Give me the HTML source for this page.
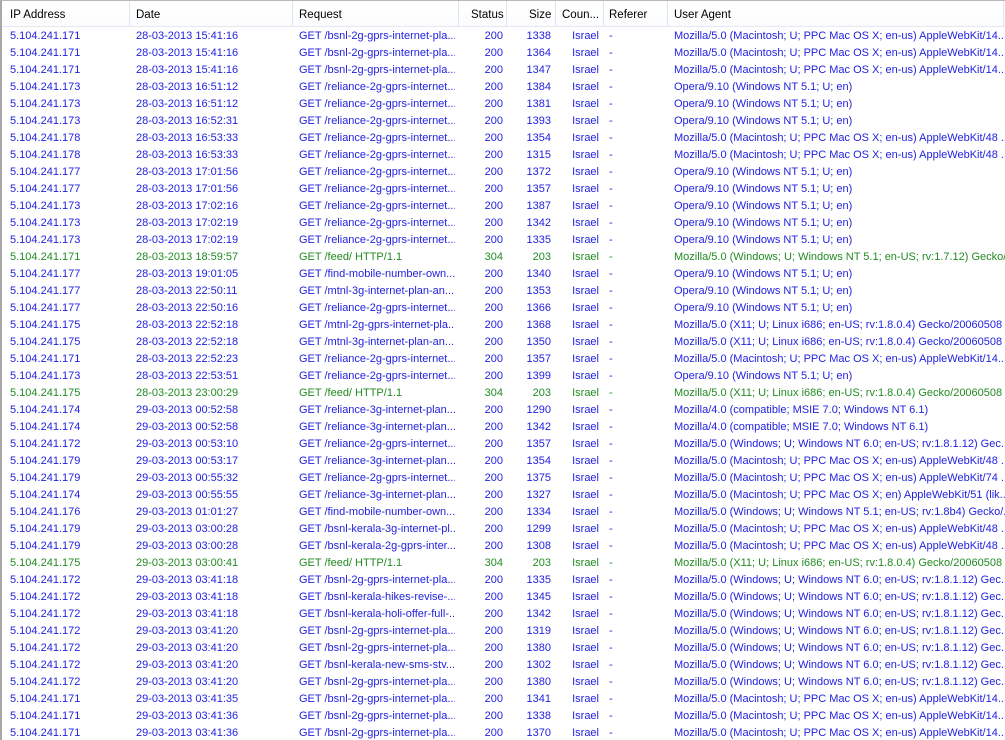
<!DOCTYPE html>
<html><head><meta charset="utf-8"><style>
body{margin:0;width:1005px;height:740px;overflow:hidden;background:#fff;font-family:"Liberation Sans",Tahoma,sans-serif;font-size:11px;}
#w{position:absolute;left:0;top:0;width:1005px;height:740px;border-left:2px solid #a8a8a8;border-top:1px solid #b8b8b8;box-sizing:border-box;overflow:hidden}
#h{position:absolute;left:0;top:0;width:1005px;height:25px;background:linear-gradient(#fff,#fbfcfd);border-bottom:1px solid #e5e8ee;color:#000;font-size:11.5px}
#h span{position:absolute;top:8px;white-space:nowrap}
#h i{position:absolute;top:0;width:1px;height:25px;background:#dfe5ee}
.r{position:relative;height:17px;color:#2222e0;white-space:nowrap}
.g{color:#228b22}
.r span{position:absolute;top:3px;overflow:hidden}
.a{left:8px}.b{left:134px}.c{left:297px;width:156px}
.d{right:502px;text-align:right}.e{right:454px;text-align:right}.f{right:406px;text-align:right}
.x{left:607px}.u{left:672px}
#b{position:absolute;top:26px;left:0;width:1003px}
</style></head><body><div id="w">
<div id="h">
<span style="left:8px">IP Address</span><i style="left:127px"></i>
<span style="left:134px">Date</span><i style="left:290px"></i>
<span style="left:297px">Request</span><i style="left:456px"></i>
<span style="left:469px">Status</span><i style="left:504px"></i>
<span style="left:527px">Size</span><i style="left:553px"></i>
<span style="left:560px">Coun...</span><i style="left:601px"></i>
<span style="left:607px">Referer</span><i style="left:665px"></i>
<span style="left:672px">User Agent</span><i style="left:1001px"></i>
</div>
<div id="b">
<div class="r"><span class="a">5.104.241.171</span><span class="b">28-03-2013 15:41:16</span><span class="c">GET /bsnl-2g-gprs-internet-pla...</span><span class="d">200</span><span class="e">1338</span><span class="f">Israel</span><span class="x">-</span><span class="u">Mozilla/5.0 (Macintosh; U; PPC Mac OS X; en-us) AppleWebKit/14...</span></div>
<div class="r"><span class="a">5.104.241.171</span><span class="b">28-03-2013 15:41:16</span><span class="c">GET /bsnl-2g-gprs-internet-pla...</span><span class="d">200</span><span class="e">1364</span><span class="f">Israel</span><span class="x">-</span><span class="u">Mozilla/5.0 (Macintosh; U; PPC Mac OS X; en-us) AppleWebKit/14...</span></div>
<div class="r"><span class="a">5.104.241.171</span><span class="b">28-03-2013 15:41:16</span><span class="c">GET /bsnl-2g-gprs-internet-pla...</span><span class="d">200</span><span class="e">1347</span><span class="f">Israel</span><span class="x">-</span><span class="u">Mozilla/5.0 (Macintosh; U; PPC Mac OS X; en-us) AppleWebKit/14...</span></div>
<div class="r"><span class="a">5.104.241.173</span><span class="b">28-03-2013 16:51:12</span><span class="c">GET /reliance-2g-gprs-internet...</span><span class="d">200</span><span class="e">1384</span><span class="f">Israel</span><span class="x">-</span><span class="u">Opera/9.10 (Windows NT 5.1; U; en)</span></div>
<div class="r"><span class="a">5.104.241.173</span><span class="b">28-03-2013 16:51:12</span><span class="c">GET /reliance-2g-gprs-internet...</span><span class="d">200</span><span class="e">1381</span><span class="f">Israel</span><span class="x">-</span><span class="u">Opera/9.10 (Windows NT 5.1; U; en)</span></div>
<div class="r"><span class="a">5.104.241.173</span><span class="b">28-03-2013 16:52:31</span><span class="c">GET /reliance-2g-gprs-internet...</span><span class="d">200</span><span class="e">1393</span><span class="f">Israel</span><span class="x">-</span><span class="u">Opera/9.10 (Windows NT 5.1; U; en)</span></div>
<div class="r"><span class="a">5.104.241.178</span><span class="b">28-03-2013 16:53:33</span><span class="c">GET /reliance-2g-gprs-internet...</span><span class="d">200</span><span class="e">1354</span><span class="f">Israel</span><span class="x">-</span><span class="u">Mozilla/5.0 (Macintosh; U; PPC Mac OS X; en-us) AppleWebKit/48 ...</span></div>
<div class="r"><span class="a">5.104.241.178</span><span class="b">28-03-2013 16:53:33</span><span class="c">GET /reliance-2g-gprs-internet...</span><span class="d">200</span><span class="e">1315</span><span class="f">Israel</span><span class="x">-</span><span class="u">Mozilla/5.0 (Macintosh; U; PPC Mac OS X; en-us) AppleWebKit/48 ...</span></div>
<div class="r"><span class="a">5.104.241.177</span><span class="b">28-03-2013 17:01:56</span><span class="c">GET /reliance-2g-gprs-internet...</span><span class="d">200</span><span class="e">1372</span><span class="f">Israel</span><span class="x">-</span><span class="u">Opera/9.10 (Windows NT 5.1; U; en)</span></div>
<div class="r"><span class="a">5.104.241.177</span><span class="b">28-03-2013 17:01:56</span><span class="c">GET /reliance-2g-gprs-internet...</span><span class="d">200</span><span class="e">1357</span><span class="f">Israel</span><span class="x">-</span><span class="u">Opera/9.10 (Windows NT 5.1; U; en)</span></div>
<div class="r"><span class="a">5.104.241.173</span><span class="b">28-03-2013 17:02:16</span><span class="c">GET /reliance-2g-gprs-internet...</span><span class="d">200</span><span class="e">1387</span><span class="f">Israel</span><span class="x">-</span><span class="u">Opera/9.10 (Windows NT 5.1; U; en)</span></div>
<div class="r"><span class="a">5.104.241.173</span><span class="b">28-03-2013 17:02:19</span><span class="c">GET /reliance-2g-gprs-internet...</span><span class="d">200</span><span class="e">1342</span><span class="f">Israel</span><span class="x">-</span><span class="u">Opera/9.10 (Windows NT 5.1; U; en)</span></div>
<div class="r"><span class="a">5.104.241.173</span><span class="b">28-03-2013 17:02:19</span><span class="c">GET /reliance-2g-gprs-internet...</span><span class="d">200</span><span class="e">1335</span><span class="f">Israel</span><span class="x">-</span><span class="u">Opera/9.10 (Windows NT 5.1; U; en)</span></div>
<div class="r g"><span class="a">5.104.241.171</span><span class="b">28-03-2013 18:59:57</span><span class="c">GET /feed/ HTTP/1.1</span><span class="d">304</span><span class="e">203</span><span class="f">Israel</span><span class="x">-</span><span class="u">Mozilla/5.0 (Windows; U; Windows NT 5.1; en-US; rv:1.7.12) Gecko/...</span></div>
<div class="r"><span class="a">5.104.241.177</span><span class="b">28-03-2013 19:01:05</span><span class="c">GET /find-mobile-number-own...</span><span class="d">200</span><span class="e">1340</span><span class="f">Israel</span><span class="x">-</span><span class="u">Opera/9.10 (Windows NT 5.1; U; en)</span></div>
<div class="r"><span class="a">5.104.241.177</span><span class="b">28-03-2013 22:50:11</span><span class="c">GET /mtnl-3g-internet-plan-an...</span><span class="d">200</span><span class="e">1353</span><span class="f">Israel</span><span class="x">-</span><span class="u">Opera/9.10 (Windows NT 5.1; U; en)</span></div>
<div class="r"><span class="a">5.104.241.177</span><span class="b">28-03-2013 22:50:16</span><span class="c">GET /reliance-2g-gprs-internet...</span><span class="d">200</span><span class="e">1366</span><span class="f">Israel</span><span class="x">-</span><span class="u">Opera/9.10 (Windows NT 5.1; U; en)</span></div>
<div class="r"><span class="a">5.104.241.175</span><span class="b">28-03-2013 22:52:18</span><span class="c">GET /mtnl-2g-gprs-internet-pla...</span><span class="d">200</span><span class="e">1368</span><span class="f">Israel</span><span class="x">-</span><span class="u">Mozilla/5.0 (X11; U; Linux i686; en-US; rv:1.8.0.4) Gecko/20060508</span></div>
<div class="r"><span class="a">5.104.241.175</span><span class="b">28-03-2013 22:52:18</span><span class="c">GET /mtnl-3g-internet-plan-an...</span><span class="d">200</span><span class="e">1350</span><span class="f">Israel</span><span class="x">-</span><span class="u">Mozilla/5.0 (X11; U; Linux i686; en-US; rv:1.8.0.4) Gecko/20060508</span></div>
<div class="r"><span class="a">5.104.241.171</span><span class="b">28-03-2013 22:52:23</span><span class="c">GET /reliance-2g-gprs-internet...</span><span class="d">200</span><span class="e">1357</span><span class="f">Israel</span><span class="x">-</span><span class="u">Mozilla/5.0 (Macintosh; U; PPC Mac OS X; en-us) AppleWebKit/14...</span></div>
<div class="r"><span class="a">5.104.241.173</span><span class="b">28-03-2013 22:53:51</span><span class="c">GET /reliance-2g-gprs-internet...</span><span class="d">200</span><span class="e">1399</span><span class="f">Israel</span><span class="x">-</span><span class="u">Opera/9.10 (Windows NT 5.1; U; en)</span></div>
<div class="r g"><span class="a">5.104.241.175</span><span class="b">28-03-2013 23:00:29</span><span class="c">GET /feed/ HTTP/1.1</span><span class="d">304</span><span class="e">203</span><span class="f">Israel</span><span class="x">-</span><span class="u">Mozilla/5.0 (X11; U; Linux i686; en-US; rv:1.8.0.4) Gecko/20060508</span></div>
<div class="r"><span class="a">5.104.241.174</span><span class="b">29-03-2013 00:52:58</span><span class="c">GET /reliance-3g-internet-plan...</span><span class="d">200</span><span class="e">1290</span><span class="f">Israel</span><span class="x">-</span><span class="u">Mozilla/4.0 (compatible; MSIE 7.0; Windows NT 6.1)</span></div>
<div class="r"><span class="a">5.104.241.174</span><span class="b">29-03-2013 00:52:58</span><span class="c">GET /reliance-3g-internet-plan...</span><span class="d">200</span><span class="e">1342</span><span class="f">Israel</span><span class="x">-</span><span class="u">Mozilla/4.0 (compatible; MSIE 7.0; Windows NT 6.1)</span></div>
<div class="r"><span class="a">5.104.241.172</span><span class="b">29-03-2013 00:53:10</span><span class="c">GET /reliance-2g-gprs-internet...</span><span class="d">200</span><span class="e">1357</span><span class="f">Israel</span><span class="x">-</span><span class="u">Mozilla/5.0 (Windows; U; Windows NT 6.0; en-US; rv:1.8.1.12) Gec...</span></div>
<div class="r"><span class="a">5.104.241.179</span><span class="b">29-03-2013 00:53:17</span><span class="c">GET /reliance-3g-internet-plan...</span><span class="d">200</span><span class="e">1354</span><span class="f">Israel</span><span class="x">-</span><span class="u">Mozilla/5.0 (Macintosh; U; PPC Mac OS X; en-us) AppleWebKit/48 ...</span></div>
<div class="r"><span class="a">5.104.241.179</span><span class="b">29-03-2013 00:55:32</span><span class="c">GET /reliance-2g-gprs-internet...</span><span class="d">200</span><span class="e">1375</span><span class="f">Israel</span><span class="x">-</span><span class="u">Mozilla/5.0 (Macintosh; U; PPC Mac OS X; en-us) AppleWebKit/74 ...</span></div>
<div class="r"><span class="a">5.104.241.174</span><span class="b">29-03-2013 00:55:55</span><span class="c">GET /reliance-3g-internet-plan...</span><span class="d">200</span><span class="e">1327</span><span class="f">Israel</span><span class="x">-</span><span class="u">Mozilla/5.0 (Macintosh; U; PPC Mac OS X; en) AppleWebKit/51 (lik...</span></div>
<div class="r"><span class="a">5.104.241.176</span><span class="b">29-03-2013 01:01:27</span><span class="c">GET /find-mobile-number-own...</span><span class="d">200</span><span class="e">1334</span><span class="f">Israel</span><span class="x">-</span><span class="u">Mozilla/5.0 (Windows; U; Windows NT 5.1; en-US; rv:1.8b4) Gecko/...</span></div>
<div class="r"><span class="a">5.104.241.179</span><span class="b">29-03-2013 03:00:28</span><span class="c">GET /bsnl-kerala-3g-internet-pl...</span><span class="d">200</span><span class="e">1299</span><span class="f">Israel</span><span class="x">-</span><span class="u">Mozilla/5.0 (Macintosh; U; PPC Mac OS X; en-us) AppleWebKit/48 ...</span></div>
<div class="r"><span class="a">5.104.241.179</span><span class="b">29-03-2013 03:00:28</span><span class="c">GET /bsnl-kerala-2g-gprs-inter...</span><span class="d">200</span><span class="e">1308</span><span class="f">Israel</span><span class="x">-</span><span class="u">Mozilla/5.0 (Macintosh; U; PPC Mac OS X; en-us) AppleWebKit/48 ...</span></div>
<div class="r g"><span class="a">5.104.241.175</span><span class="b">29-03-2013 03:00:41</span><span class="c">GET /feed/ HTTP/1.1</span><span class="d">304</span><span class="e">203</span><span class="f">Israel</span><span class="x">-</span><span class="u">Mozilla/5.0 (X11; U; Linux i686; en-US; rv:1.8.0.4) Gecko/20060508</span></div>
<div class="r"><span class="a">5.104.241.172</span><span class="b">29-03-2013 03:41:18</span><span class="c">GET /bsnl-2g-gprs-internet-pla...</span><span class="d">200</span><span class="e">1335</span><span class="f">Israel</span><span class="x">-</span><span class="u">Mozilla/5.0 (Windows; U; Windows NT 6.0; en-US; rv:1.8.1.12) Gec...</span></div>
<div class="r"><span class="a">5.104.241.172</span><span class="b">29-03-2013 03:41:18</span><span class="c">GET /bsnl-kerala-hikes-revise-...</span><span class="d">200</span><span class="e">1345</span><span class="f">Israel</span><span class="x">-</span><span class="u">Mozilla/5.0 (Windows; U; Windows NT 6.0; en-US; rv:1.8.1.12) Gec...</span></div>
<div class="r"><span class="a">5.104.241.172</span><span class="b">29-03-2013 03:41:18</span><span class="c">GET /bsnl-kerala-holi-offer-full-...</span><span class="d">200</span><span class="e">1342</span><span class="f">Israel</span><span class="x">-</span><span class="u">Mozilla/5.0 (Windows; U; Windows NT 6.0; en-US; rv:1.8.1.12) Gec...</span></div>
<div class="r"><span class="a">5.104.241.172</span><span class="b">29-03-2013 03:41:20</span><span class="c">GET /bsnl-2g-gprs-internet-pla...</span><span class="d">200</span><span class="e">1319</span><span class="f">Israel</span><span class="x">-</span><span class="u">Mozilla/5.0 (Windows; U; Windows NT 6.0; en-US; rv:1.8.1.12) Gec...</span></div>
<div class="r"><span class="a">5.104.241.172</span><span class="b">29-03-2013 03:41:20</span><span class="c">GET /bsnl-2g-gprs-internet-pla...</span><span class="d">200</span><span class="e">1380</span><span class="f">Israel</span><span class="x">-</span><span class="u">Mozilla/5.0 (Windows; U; Windows NT 6.0; en-US; rv:1.8.1.12) Gec...</span></div>
<div class="r"><span class="a">5.104.241.172</span><span class="b">29-03-2013 03:41:20</span><span class="c">GET /bsnl-kerala-new-sms-stv...</span><span class="d">200</span><span class="e">1302</span><span class="f">Israel</span><span class="x">-</span><span class="u">Mozilla/5.0 (Windows; U; Windows NT 6.0; en-US; rv:1.8.1.12) Gec...</span></div>
<div class="r"><span class="a">5.104.241.172</span><span class="b">29-03-2013 03:41:20</span><span class="c">GET /bsnl-2g-gprs-internet-pla...</span><span class="d">200</span><span class="e">1380</span><span class="f">Israel</span><span class="x">-</span><span class="u">Mozilla/5.0 (Windows; U; Windows NT 6.0; en-US; rv:1.8.1.12) Gec...</span></div>
<div class="r"><span class="a">5.104.241.171</span><span class="b">29-03-2013 03:41:35</span><span class="c">GET /bsnl-2g-gprs-internet-pla...</span><span class="d">200</span><span class="e">1341</span><span class="f">Israel</span><span class="x">-</span><span class="u">Mozilla/5.0 (Macintosh; U; PPC Mac OS X; en-us) AppleWebKit/14...</span></div>
<div class="r"><span class="a">5.104.241.171</span><span class="b">29-03-2013 03:41:36</span><span class="c">GET /bsnl-2g-gprs-internet-pla...</span><span class="d">200</span><span class="e">1338</span><span class="f">Israel</span><span class="x">-</span><span class="u">Mozilla/5.0 (Macintosh; U; PPC Mac OS X; en-us) AppleWebKit/14...</span></div>
<div class="r"><span class="a">5.104.241.171</span><span class="b">29-03-2013 03:41:36</span><span class="c">GET /bsnl-2g-gprs-internet-pla...</span><span class="d">200</span><span class="e">1370</span><span class="f">Israel</span><span class="x">-</span><span class="u">Mozilla/5.0 (Macintosh; U; PPC Mac OS X; en-us) AppleWebKit/14...</span></div>
</div>
</div></body></html>
